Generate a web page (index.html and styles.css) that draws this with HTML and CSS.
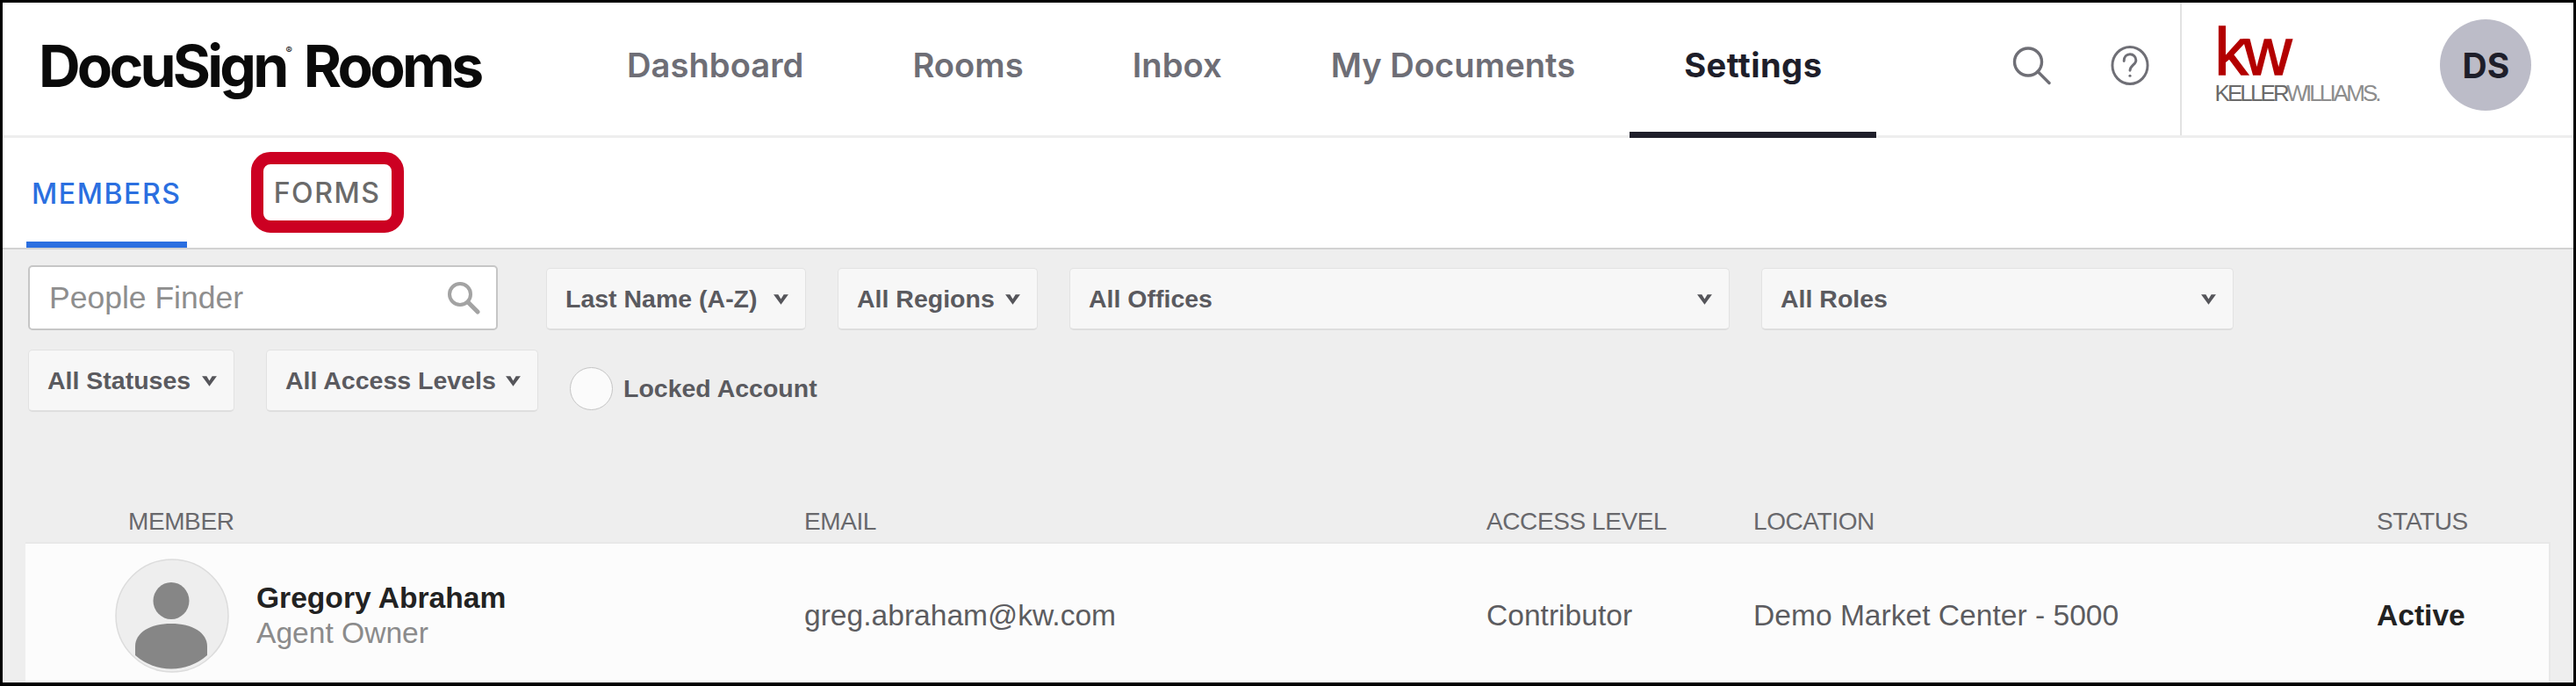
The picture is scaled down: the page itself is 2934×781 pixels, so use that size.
FILE: index.html
```html
<!DOCTYPE html>
<html lang="en">
<head>
<meta charset="utf-8">
<title>DocuSign Rooms - Settings</title>
<link rel="stylesheet" href="styles.css">
</head>
<body>
<div class="frame">
  <header class="topbar">
    <div class="logo">DocuSign<sup class="reg">®</sup> Rooms</div>
    <nav class="nav">
      <a class="nav-item">Dashboard</a>
      <a class="nav-item">Rooms</a>
      <a class="nav-item">Inbox</a>
      <a class="nav-item">My Documents</a>
      <a class="nav-item active">Settings</a>
    </nav>
    <div class="tools">
      <svg class="tool-icon" viewBox="0 0 44 44" fill="none" stroke="#6f6f76" stroke-width="3.4" stroke-linecap="round"><circle cx="18" cy="18" r="15.5"/><path d="M29 29l13 13"/></svg>
      <svg class="tool-icon" viewBox="0 0 44 46" fill="none" stroke="#6f6f76" stroke-width="3"><ellipse cx="22" cy="23" rx="20.5" ry="21.5"/><path d="M15 18c0-5 3-8 7-8s7 3 7 7c0 5-7 6-7 12" stroke-linecap="round"/><circle cx="22" cy="35" r="1.6" fill="#6f6f76" stroke="none"/></svg>
    </div>
    <div class="account">
      <div class="kw">
        <div class="kw-mark">kw</div>
        <div class="kw-name"><span class="kw-strong">KELLER</span>WILLIAMS.</div>
      </div>
      <div class="avatar">DS</div>
    </div>
  </header>

  <div class="tabs">
    <a class="tab active">MEMBERS</a>
    <a class="tab highlight">FORMS</a>
  </div>

  <main class="content">
    <div class="filters">
      <div class="filter-row first">
        <div class="search">
          <span class="placeholder">People Finder</span>
          <svg class="search-icon" viewBox="0 0 38 38" fill="none" stroke="#a3a3a3" stroke-linecap="round"><circle cx="15" cy="15" r="12" stroke-width="4"/><path d="M24 24l11 11" stroke-width="5"/></svg>
        </div>
        <div class="select w-sort">Last Name (A-Z)<svg class="chev" viewBox="0 0 18 12"><path d="M1 1h5l3 5 3-5h5l-8 11z"/></svg></div>
        <div class="select w-regions">All Regions<svg class="chev" viewBox="0 0 18 12"><path d="M1 1h5l3 5 3-5h5l-8 11z"/></svg></div>
        <div class="select w-offices">All Offices<svg class="chev" viewBox="0 0 18 12"><path d="M1 1h5l3 5 3-5h5l-8 11z"/></svg></div>
        <div class="select w-roles">All Roles<svg class="chev" viewBox="0 0 18 12"><path d="M1 1h5l3 5 3-5h5l-8 11z"/></svg></div>
      </div>
      <div class="filter-row second">
        <div class="select w-status">All Statuses<svg class="chev" viewBox="0 0 18 12"><path d="M1 1h5l3 5 3-5h5l-8 11z"/></svg></div>
        <div class="select w-access">All Access Levels<svg class="chev" viewBox="0 0 18 12"><path d="M1 1h5l3 5 3-5h5l-8 11z"/></svg></div>
        <label class="locked"><span class="radio"></span>Locked Account</label>
      </div>
    </div>

    <div class="grid thead">
      <div class="th-member">MEMBER</div>
      <div>EMAIL</div>
      <div>ACCESS LEVEL</div>
      <div>LOCATION</div>
      <div>STATUS</div>
    </div>
    <div class="grid row">
      <div class="member">
        <svg class="person" viewBox="0 0 130 130">
          <circle cx="65" cy="65" r="64" fill="#eeeeee" stroke="#dcdcdc" stroke-width="1.5"/>
          <ellipse cx="64" cy="48" rx="20.5" ry="21" fill="#868686"/>
          <path d="M23 100C23 84 40 74 64 74S105 84 105 100V110A62 62 0 0 1 23 110Z" fill="#868686"/>
        </svg>
        <div class="who">
          <div class="name">Gregory Abraham</div>
          <div class="role">Agent Owner</div>
        </div>
      </div>
      <div class="cell">greg.abraham@kw.com</div>
      <div class="cell">Contributor</div>
      <div class="cell">Demo Market Center - 5000</div>
      <div class="cell status">Active</div>
    </div>
  </main>
</div>
</body>
</html>
```
FILE: styles.css
```css
* { box-sizing: border-box; }
html, body { margin: 0; padding: 0; background: #fff; }
.frame {
  width: 2934px;
  height: 781px;
  border-style: solid;
  border-color: #000;
  border-width: 3px 3px 4px 3px;
  overflow: hidden;
  display: flex;
  flex-direction: column;
  font-family: "Liberation Sans", Arial, sans-serif;
}
.topbar {
  height: 154px;
  flex: none;
  display: flex;
  align-items: stretch;
  border-bottom: 3px solid #eeeeee;
  background: #fff;
}
.logo {
  width: 649px;
  padding-left: 41px;
  padding-top: 34px;
  font-family: Inter, sans-serif;
  font-weight: 700;
  font-size: 66px;
  letter-spacing: -3.8px;
  line-height: 76px;
  color: #0a0a0a;
  white-space: nowrap;
}
.reg { font-size: 11px; font-weight: 400; letter-spacing: 0; vertical-align: 38px; line-height: 0; margin-right: 1px; }
.nav { display: flex; align-items: stretch; }
.nav-item {
  padding: 41px 62px 0;
  font-family: Inter, sans-serif;
  font-size: 38.2px;
  font-weight: 600;
  line-height: 60px;
  color: #6e6e76;
  white-space: nowrap;
  height: 154px;
}
.nav-item.active {
  font-weight: 700;
  letter-spacing: 0.4px;
  color: #1e1e2a;
  border-bottom: 7px solid #1e1e2a;
}
.tools {
  margin-left: 155px;
  display: flex;
  gap: 68px;
  align-items: flex-start;
  padding-top: 49px;
}
.tool-icon { width: 44px; height: 45px; display: block; }
.account {
  margin-left: 35px;
  border-left: 2px solid #e2e2e2;
  display: flex;
  flex: 1;
  padding-left: 37px;
}
.kw { width: 257px; padding-top: 22px; }
.kw-mark {
  font-family: "Liberation Sans", sans-serif;
  font-size: 76px;
  line-height: 68px;
  letter-spacing: -5px;
  color: #b30000;
  -webkit-text-stroke: 1.5px #b30000;
}
.kw-name {
  font-family: "Liberation Sans", sans-serif;
  font-size: 26px;
  line-height: 26px;
  letter-spacing: -2.9px;
  color: #8d8d8d;
  white-space: nowrap;
}
.kw-strong { color: #6a6a6a; }
.avatar {
  width: 104px;
  height: 104px;
  margin-top: 19px;
  border-radius: 50%;
  background: #bcbcc8;
  color: #1e1e2a;
  font-family: Inter, sans-serif;
  font-size: 39px;
  font-weight: 700;
  display: flex;
  align-items: center;
  justify-content: center;
}
.tabs {
  height: 127px;
  flex: none;
  display: flex;
  gap: 73px;
  align-items: flex-start;
  padding-left: 27px;
  background: #fff;
  border-bottom: 2px solid #d2d2d2;
}
.tab {
  font-family: Inter, sans-serif;
  font-size: 32px;
  font-weight: 500;
  letter-spacing: 1.6px;
  white-space: nowrap;
}
.tab.active {
  height: 125px;
  padding: 44px 6px 0;
  line-height: 40px;
  color: #2b6fe0;
  border-bottom: 7px solid #2b6fe0;
}
.tab.highlight {
  margin-top: 16px;
  height: 92px;
  width: 174px;
  border: 14px solid #cc0022;
  border-radius: 22px;
  color: #6a6a6a;
  line-height: 65px;
  text-align: center;
}
.content {
  flex: 1;
  background: #eeeeee;
  padding-left: 26px;
  display: flex;
  flex-direction: column;
  overflow: hidden;
}
.filters { flex: none; padding-top: 18px; padding-left: 3px; }
.filter-row { display: flex; gap: 36px; }
.filter-row.first { align-items: flex-end; }
.filter-row.second { margin-top: 22px; align-items: flex-start; }
.search {
  width: 535px;
  height: 74px;
  margin-right: 19px;
  background: #fff;
  border: 2px solid #c6c6c6;
  border-radius: 5px;
  display: flex;
  align-items: center;
  justify-content: space-between;
  padding: 0 18px 0 22px;
}
.placeholder { font-size: 35.5px; color: #8e8e8e; }
.search-icon { width: 38px; height: 38px; display: block; }
.select {
  height: 71px;
  background: #f7f7f7;
  border: 1px solid #e2e2e2;
  border-bottom: 2px solid #dedede;
  border-radius: 5px;
  display: flex;
  align-items: center;
  justify-content: space-between;
  padding: 0 18px 0 21px;
  font-size: 28.5px;
  font-weight: 700;
  color: #5a5a5f;
  white-space: nowrap;
}
.chev { width: 19px; height: 13px; display: block; fill: #55555a; }
.w-sort { width: 296px; }
.w-regions { width: 228px; }
.w-offices { width: 752px; }
.w-roles { width: 538px; }
.w-status { width: 235px; }
.w-access { width: 310px; }
.locked {
  display: flex;
  align-items: center;
  gap: 12px;
  margin-top: 20px;
  font-size: 28.5px;
  font-weight: 700;
  color: #5a5a5f;
  white-space: nowrap;
}
.radio {
  width: 49px;
  height: 49px;
  border-radius: 50%;
  background: #fbfbfb;
  border: 1px solid #c4c4c4;
  flex: none;
}
.grid {
  display: grid;
  grid-template-columns: 785px 777px 304px 710px 1fr;
}
.thead {
  flex: none;
  margin-top: 108px;
  height: 40px;
  padding-left: 102px;
  font-size: 28px;
  letter-spacing: -0.4px;
  line-height: 33px;
  color: #68686c;
}
.th-member { padding-left: 15px; }
.row {
  width: 2876px;
  height: 166px;
  flex: none;
  padding-left: 102px;
  background: #fcfcfc;
  border-top: 2px solid #e8e8e8;
  border-right: 2px solid #e8e8e8;
  align-items: center;
}
.member { display: flex; align-items: center; gap: 31px; }
.person { width: 130px; height: 130px; display: block; flex: none; }
.name { font-size: 33.6px; font-weight: 700; color: #222; line-height: 40px; }
.role { font-size: 33.6px; color: #8b8b8b; line-height: 40px; }
.cell { font-size: 33.6px; color: #5c5c60; }
.status { font-weight: 700; color: #222; }
```
